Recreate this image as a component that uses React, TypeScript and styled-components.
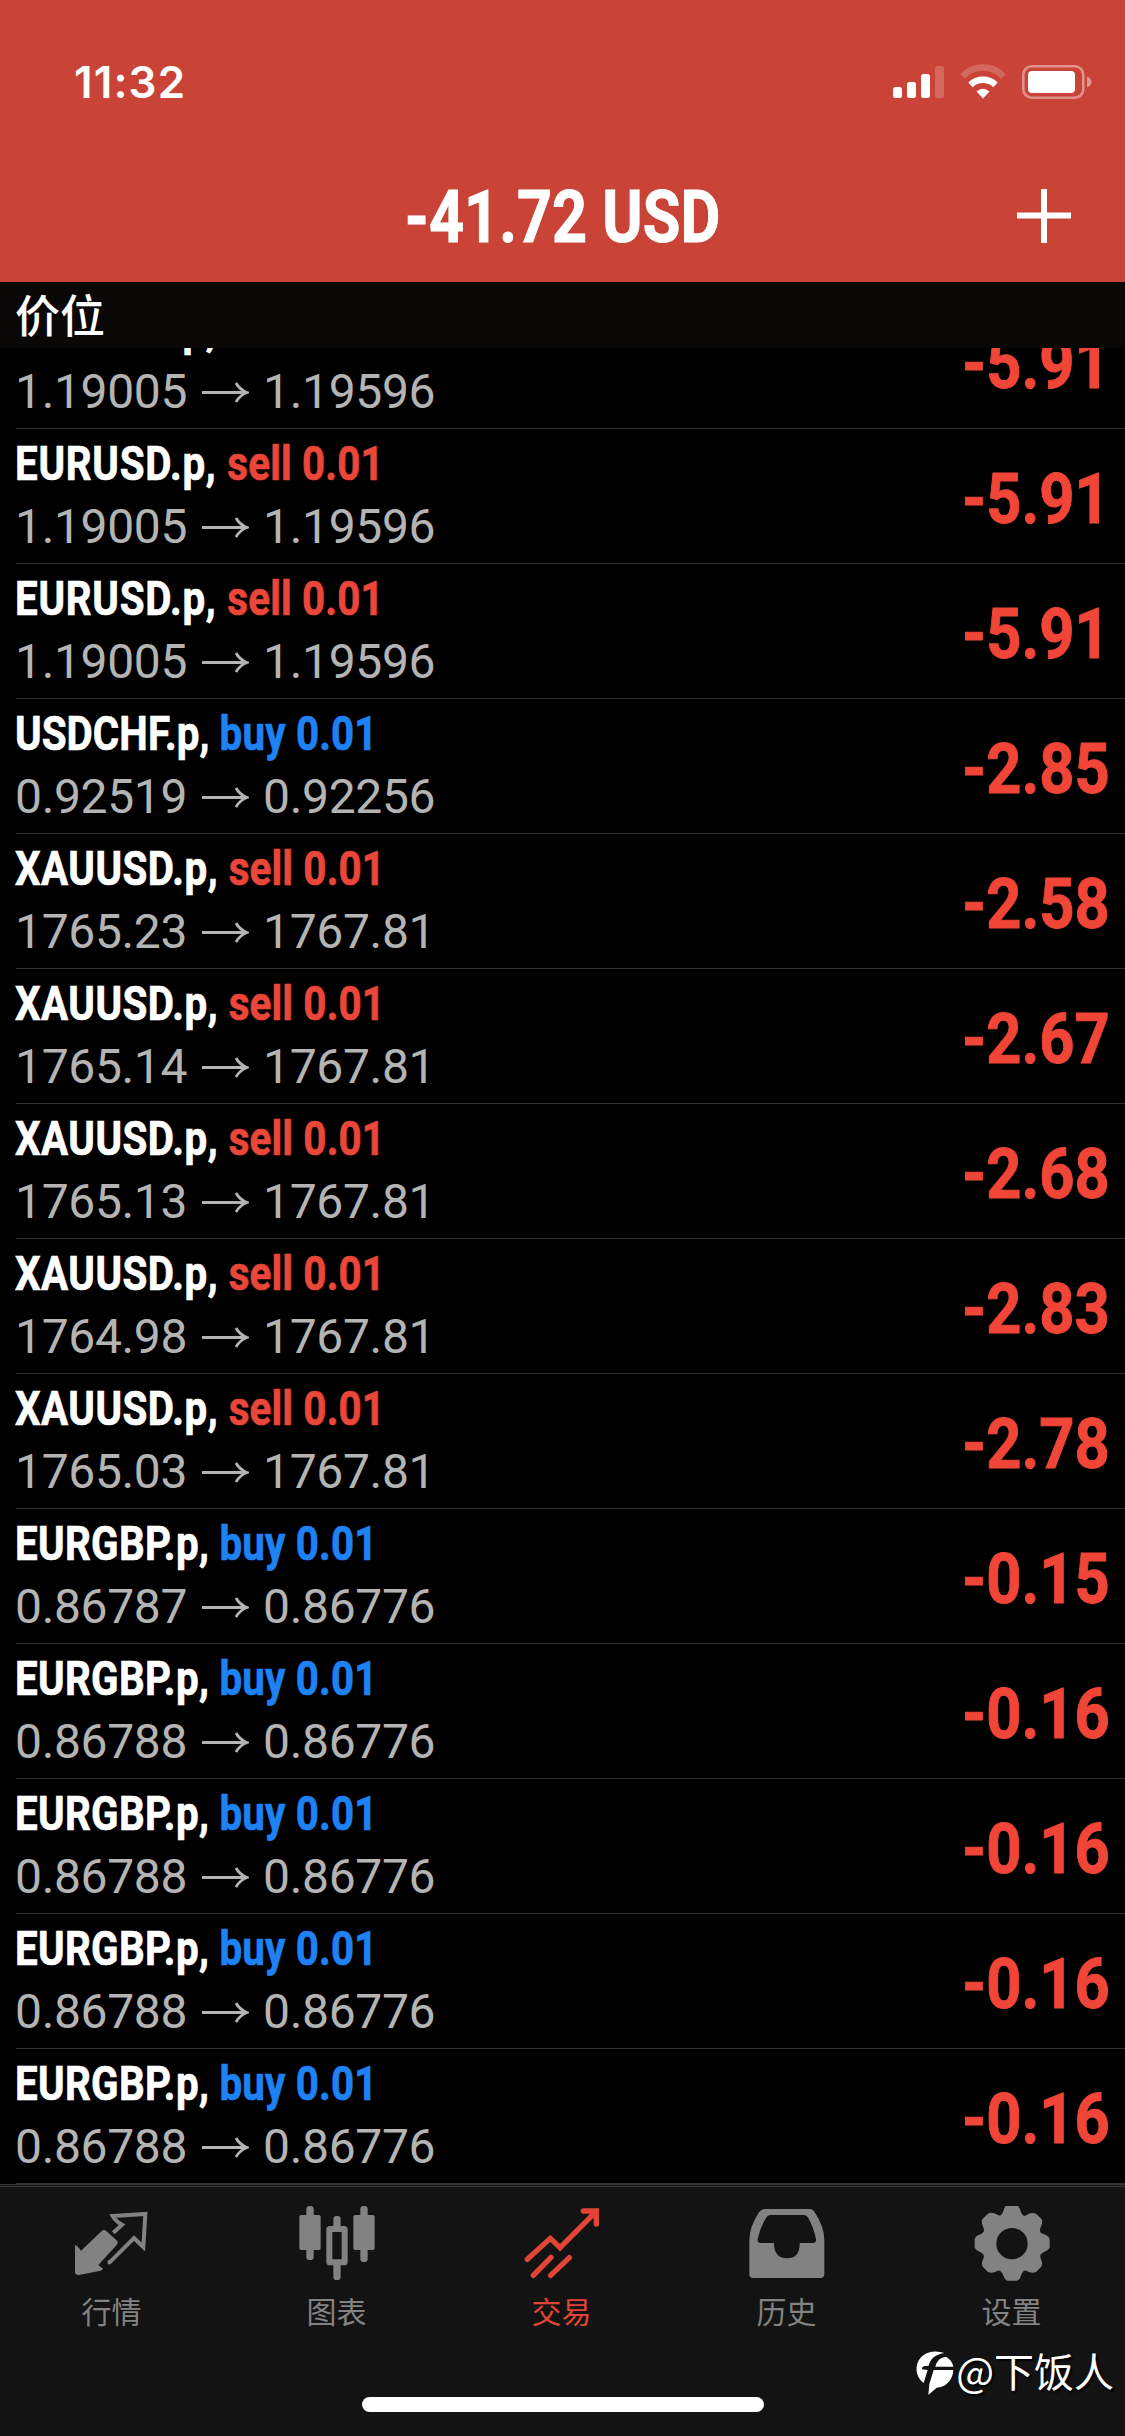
import React from 'react';
import styled, { createGlobalStyle } from 'styled-components';

const sans = `Roboto, 'Liberation Sans', 'Noto Sans CJK SC', sans-serif`;
const cjk = `'Noto Sans CJK SC', sans-serif`;

const GlobalStyle = createGlobalStyle`
  * { box-sizing: border-box; }
  html, body { margin: 0; padding: 0; background: #000; }
`;

const Screen = styled.div`
  position: relative;
  width: 1125px;
  height: 2436px;
  display: flex;
  flex-direction: column;
  overflow: hidden;
  background: #000;
  color: #fff;
  font-family: ${sans};
`;

const Header = styled.header`
  height: 282px;
  flex: none;
  display: flex;
  flex-direction: column;
  background: #c94337;
`;

const StatusBar = styled.div`
  height: 150px;
  flex: none;
  display: flex;
  justify-content: space-between;
  padding: 52px 33px 0 74px;
`;

const Clock = styled.span`
  font: 600 44px/60px Inter, sans-serif;
  letter-spacing: 1.1px;
`;

const StatusIcons = styled.div`
  display: flex;
  padding-top: 12px;
`;

const NavBar = styled.div`
  height: 132px;
  display: grid;
  grid-template-columns: 200px 1fr 200px;
  align-items: center;
`;

const Title = styled.h1`
  grid-column: 2;
  margin: 0;
  padding-top: 3px;
  text-align: center;
  font-size: 72px;
  line-height: 84px;
  font-weight: 700;
  white-space: nowrap;
  transform: scaleX(0.85);
  -webkit-text-stroke: 1px currentColor;
`;

const AddButton = styled.button`
  justify-self: end;
  display: flex;
  margin: 0 54px 0 0;
  padding: 0;
  border: 0;
  background: none;
`;

const SectionHeader = styled.div`
  height: 66px;
  flex: none;
  padding-left: 15px;
  background: #090807;
  font: 500 45px/64px ${cjk};
`;

const List = styled.main`
  height: 1836px;
  flex: none;
  display: flex;
  flex-direction: column;
  justify-content: flex-end;
  overflow: hidden;
`;

const Row = styled.div`
  height: 135px;
  flex: none;
  display: flex;
  justify-content: space-between;
  margin-left: 16px;
  padding-right: 15px;
  border-bottom: 1px solid #2f2f2f;
`;

const Info = styled.div`
  display: flex;
  flex-direction: column;
`;

const Symbol = styled.div<{ $tracking: number }>`
  height: 68px;
  margin-left: -1px;
  padding-top: 7px;
  font-size: 48px;
  line-height: 56px;
  font-weight: 700;
  letter-spacing: ${(p) => p.$tracking}px;
  white-space: nowrap;
  transform: scaleX(0.84);
  transform-origin: left;
  -webkit-text-stroke: 0.7px currentColor;
`;

const Side = styled.span<{ $buy: boolean }>`
  letter-spacing: 0.2px;
  color: ${(p) => (p.$buy ? '#1e82f5' : '#ea4639')};
`;

const Prices = styled.div`
  display: flex;
  align-items: center;
  gap: 14px;
  margin-left: -1px;
  color: #b4b4b4;
  font-size: 48px;
  line-height: 60px;
  font-weight: 400;
  letter-spacing: -0.35px;
`;

const Profit = styled.div`
  padding-top: 30px;
  color: #f04537;
  font-size: 71px;
  line-height: 80px;
  font-weight: 700;
  white-space: nowrap;
  transform: scaleX(0.865);
  transform-origin: right;
  -webkit-text-stroke: 1px currentColor;
`;

const TabBar = styled.nav`
  height: 252px;
  flex: none;
  display: grid;
  grid-template-columns: repeat(5, 225px);
  margin-left: -1px;
  padding-top: 18px;
  border-top: 3px double #3a3a3a;
  background: #131313;
`;

const Tab = styled.div<{ $active?: boolean }>`
  display: flex;
  flex-direction: column;
  align-items: center;
  gap: 9px;
  color: ${(p) => (p.$active ? '#e24436' : '#828282')};
`;

const TabLabel = styled.span`
  font: 400 30px/40px ${cjk};
`;

const HomeIndicator = styled.div`
  position: absolute;
  left: 362px;
  bottom: 24px;
  width: 402px;
  height: 15px;
  border-radius: 8px;
  background: #fff;
`;

const Watermark = styled.div`
  position: absolute;
  right: 11px;
  bottom: 36px;
  display: flex;
  align-items: center;
  gap: 2px;
  font: 400 40px/60px ${cjk};
  text-shadow: 2px 2px 2px #000;

  svg {
    margin-top: 6px;
  }
`;

const tracking: Record<string, number> = {
  'EURUSD.p': 0.9,
  'XAUUSD.p': 0.6,
  'USDCHF.p': 0.1,
  'EURGBP.p': 0.4,
};

const positions: [string, string, string, string, string][] = [
  ['EURUSD.p', 'sell', '1.19005', '1.19596', '-5.91'],
  ['EURUSD.p', 'sell', '1.19005', '1.19596', '-5.91'],
  ['EURUSD.p', 'sell', '1.19005', '1.19596', '-5.91'],
  ['USDCHF.p', 'buy', '0.92519', '0.92256', '-2.85'],
  ['XAUUSD.p', 'sell', '1765.23', '1767.81', '-2.58'],
  ['XAUUSD.p', 'sell', '1765.14', '1767.81', '-2.67'],
  ['XAUUSD.p', 'sell', '1765.13', '1767.81', '-2.68'],
  ['XAUUSD.p', 'sell', '1764.98', '1767.81', '-2.83'],
  ['XAUUSD.p', 'sell', '1765.03', '1767.81', '-2.78'],
  ['EURGBP.p', 'buy', '0.86787', '0.86776', '-0.15'],
  ['EURGBP.p', 'buy', '0.86788', '0.86776', '-0.16'],
  ['EURGBP.p', 'buy', '0.86788', '0.86776', '-0.16'],
  ['EURGBP.p', 'buy', '0.86788', '0.86776', '-0.16'],
  ['EURGBP.p', 'buy', '0.86788', '0.86776', '-0.16'],
];

const StatusGlyphs = () => (
  <svg width="199" height="36" viewBox="0 0 199 36" fill="#fff">
    <rect x="0" y="23" width="9" height="11" rx="2.5" />
    <rect x="14" y="18" width="9" height="16" rx="2.5" />
    <rect x="28" y="10" width="9" height="24" rx="2.5" />
    <rect x="42" y="2" width="9" height="32" rx="2.5" opacity=".2" />
    <g fill="none" stroke="#fff">
      <path d="M69.500 12.500A28 28 0 0 1 110.500 12.500" strokeWidth="6.5" opacity=".2" />
      <path d="M77.500 20.800A18 18 0 0 1 102.500 20.800" strokeWidth="6.500" />
    </g>
    <path d="M90 34.500L83.500 27.600Q90 21.700 96.500 27.600Z" />
    <rect x="130.300" y="2.300" width="60" height="31.400" rx="8.500" fill="none" stroke="#fff" strokeWidth="2.600" opacity=".42" />
    <rect x="135" y="7" width="47" height="22" rx="4" />
    <path d="M194 12.500Q198.500 14.500 198.500 18T194 23.500Z" opacity=".45" />
  </svg>
);

const Arrow = () => (
  <svg width="48" height="24" viewBox="0 0 48 24" fill="none" stroke="currentColor" strokeWidth="2.800">
    <path d="M1 12.500H46M35 3Q38.500 9.500 46 12.500Q38.500 15.500 35 22" />
  </svg>
);

const icon = { width: 76, height: 76, viewBox: '0 0 228 228', fill: 'currentColor' };

const QuotesIcon = () => (
  <svg {...icon}>
    <path d="M5 121Q11 123 21 137L84 77Q91 73 97 78L130 108Q134 114 128 120L73 180L87 191Q85 196 79 197L15 210Q3 211 3 201V125Q3 121 5 121Z" />
    <path d="M118 83L144 59Q126 50 116 33L214 27L208 126Q193 112 180 99L107 172H101" fill="none" stroke="currentColor" strokeWidth="12" />
  </svg>
);

const ChartIcon = () => (
  <svg {...icon}>
    <rect x="22" y="3" width="22" height="162" rx="10" />
    <rect x="1" y="30" width="64" height="105" rx="6" />
    <rect x="184" y="3" width="22" height="168" rx="10" />
    <rect x="163" y="30" width="64" height="105" rx="6" />
    <rect x="103" y="33" width="22" height="42" rx="10" />
    <rect x="103" y="170" width="22" height="55" rx="10" />
    <rect x="91" y="72" width="46" height="100" rx="2" fill="none" stroke="currentColor" strokeWidth="18" />
  </svg>
);

const TradeIcon = () => (
  <svg {...icon} fill="none" stroke="currentColor" strokeWidth="16" strokeLinecap="round">
    <path d="M10 163L79 100L108 128L216 20" />
    <path d="M178 18H217V57" strokeLinejoin="miter" />
    <path d="M28 211L81 157M80 211L136 158" />
  </svg>
);

const HistoryIcon = () => (
  <svg {...icon}>
    <path
      fillRule="evenodd"
      d="M47 12H182Q191 12 197 22Q226 66 226 105V207Q226 219 214 219H13Q1 219 1 207V105Q1 66 30 22Q37 12 47 12ZM63 30Q56 30 51 39Q32 70 26 103Q25 114 35 114H75Q75 160 114 160T152 114H192Q202 114 201 103Q195 70 178 39Q173 30 165 30Z"
    />
  </svg>
);

const SettingsIcon = () => (
  <svg {...icon}>
    <path
      fillRule="evenodd"
      d="M96 3H131Q135 4 140 19Q145 32 151 33Q158 31 168 25Q181 22 188 28L203 43Q207 50 202 62Q195 76 200 83Q207 87 217 91Q226 95 227 103V127Q226 134 216 138Q204 143 199 149Q198 157 202 166Q207 178 201 186L186 201Q178 206 165 201Q155 195 150 197Q144 202 140 214Q137 226 128 227H101Q93 226 89 214Q84 201 78 197Q72 195 63 201Q50 206 42 201L27 186Q21 178 26 166Q31 157 29 150Q25 143 12 138Q3 134 2 127V103Q3 95 12 91Q24 87 29 80Q32 74 26 62Q21 50 25 43L40 28Q48 21 61 25Q71 31 78 32Q84 30 88 19Q92 4 96 3ZM114 69A47 47 0 1 0 114 163A47 47 0 1 0 114 69Z"
    />
  </svg>
);

const WatermarkLogo = () => (
  <svg width="38" height="44" viewBox="0 0 114 132" fill="#fff">
    <path d="M85 6C55 10 43 25 38 44L23 46Q17 49 18 55L35 57L23 96C-6 75 -4 34 20 14Q48 -6 85 6Z" />
    <path d="M58 47Q65 19 90 17Q108 27 112 47Z" />
    <path d="M53 57H112C111 88 88 109 62 110L37 132L40 99Z" />
  </svg>
);

const tabs = [
  { label: '行情', Icon: QuotesIcon },
  { label: '图表', Icon: ChartIcon },
  { label: '交易', Icon: TradeIcon, active: true },
  { label: '历史', Icon: HistoryIcon },
  { label: '设置', Icon: SettingsIcon },
];

export default function App() {
  return (
    <Screen>
      <GlobalStyle />
      <Header>
        <StatusBar>
          <Clock>11:32</Clock>
          <StatusIcons>
            <StatusGlyphs />
          </StatusIcons>
        </StatusBar>
        <NavBar>
          <Title>-41.72 USD</Title>
          <AddButton aria-label="add">
            <svg width="54" height="54" viewBox="0 0 54 54" stroke="#fff" strokeWidth="6">
              <path d="M0 26.500H54M27 0V54" />
            </svg>
          </AddButton>
        </NavBar>
      </Header>
      <SectionHeader>价位</SectionHeader>
      <List>
        {positions.map(([symbol, side, open, current, profit], i) => (
          <Row key={i}>
            <Info>
              <Symbol $tracking={tracking[symbol]}>
                {symbol}, <Side $buy={side === 'buy'}>{side} 0.01</Side>
              </Symbol>
              <Prices>
                <span>{open}</span>
                <Arrow />
                <span>{current}</span>
              </Prices>
            </Info>
            <Profit>{profit}</Profit>
          </Row>
        ))}
      </List>
      <TabBar>
        {tabs.map(({ label, Icon, active }) => (
          <Tab key={label} $active={active}>
            <Icon />
            <TabLabel>{label}</TabLabel>
          </Tab>
        ))}
      </TabBar>
      <HomeIndicator />
      <Watermark>
        <WatermarkLogo />
        <span>@下饭人</span>
      </Watermark>
    </Screen>
  );
}
